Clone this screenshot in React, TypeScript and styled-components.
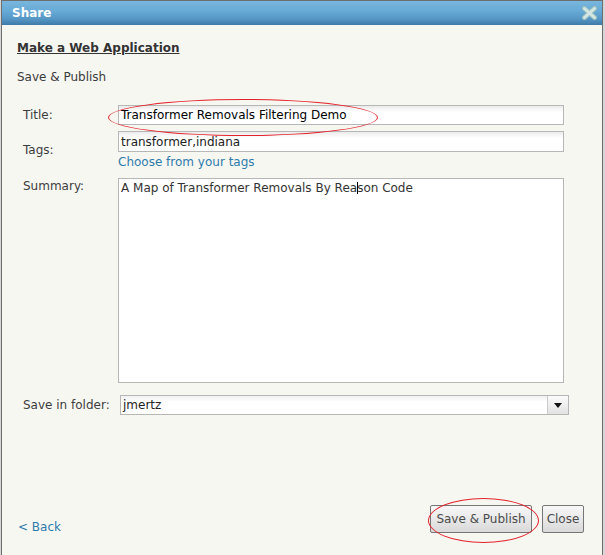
import React from "react";
import styled, { createGlobalStyle } from "styled-components";

const GlobalStyle = createGlobalStyle`
  html, body { margin: 0; padding: 0; background: #d6d6d6; overflow: hidden; }
  body { font-family: "DejaVu Sans", Verdana, sans-serif; font-size: 12px; }
`;

const Dialog = styled.div`
  position: relative;
  margin-left: 1px;
  width: 602px;
  height: 570px;
  box-sizing: border-box;
  border: 1px solid #6e6e6e;
  border-bottom: none;
  background: #f7f7f2;
  display: flex;
  flex-direction: column;
`;

const TitleBar = styled.div`
  height: 24px;
  box-sizing: border-box;
  display: flex;
  align-items: center;
  justify-content: space-between;
  padding: 0 5px 0 10px;
  background: linear-gradient(to bottom, #78b6dd 0%, #68abd7 40%, #5596c5 75%, #3d7aa8 100%);
`;

const TitleText = styled.span`
  color: #ffffff;
  font-weight: bold;
  font-size: 12px;
  line-height: 14px;
`;

const CloseIcon = styled.svg`
  width: 15px;
  height: 14px;
  display: block;
`;

const Body = styled.div`
  padding: 0 15px;
  display: flex;
  flex-direction: column;
`;

const Heading = styled.div`
  margin-top: 16px;
  font-weight: bold;
  color: #333333;
  line-height: 14px;
  text-decoration: underline;
`;

const SubHeading = styled.div`
  margin-top: 15px;
  color: #3a3a3a;
  line-height: 14px;
`;

const Form = styled.div`
  margin-top: 21px;
  margin-left: 6px;
  display: flex;
  flex-direction: column;
`;

const Row = styled.div<{ $mt: number; $align: string }>`
  display: flex;
  align-items: ${(p) => p.$align};
  margin-top: ${(p) => p.$mt}px;
`;

const Label = styled.div<{ $mt?: number }>`
  width: 95px;
  flex-shrink: 0;
  color: #3d3d3d;
  line-height: 14px;
  margin-top: ${(p) => p.$mt ?? 0}px;
`;

const FieldStack = styled.div`
  display: flex;
  flex-direction: column;
`;

const Field = styled.div<{ $h: number; $dark?: boolean }>`
  width: 446px;
  height: ${(p) => p.$h}px;
  box-sizing: border-box;
  border: 1px solid #b7b7b7;
  background: linear-gradient(to bottom, #ebebeb 0px, #ffffff 6px);
  padding: 1px 2px 0;
  line-height: ${(p) => p.$h - 3}px;
  color: ${(p) => (p.$dark ? "#000000" : "#222222")};
  white-space: nowrap;
  overflow: hidden;
`;

const TextArea = styled.div`
  width: 446px;
  height: 205px;
  box-sizing: border-box;
  border: 1px solid #b7b7b7;
  background: #ffffff;
  padding: 2px 2px;
  line-height: 14px;
  color: #333333;
`;

const Caret = styled.span`
  display: inline-block;
  width: 1px;
  height: 12px;
  background: #000;
  vertical-align: -2px;
  margin: 0 -0.5px;
`;

const Link = styled.div`
  margin-top: 3px;
  line-height: 14px;
  color: #2d7bab;
`;

const Select = styled.div`
  margin-left: 2px;
  width: 449px;
  height: 20px;
  box-sizing: border-box;
  border: 1px solid #b7b7b7;
  display: flex;
  background: #ffffff;
`;

const SelectValue = styled.div`
  flex: 1;
  padding-left: 2px;
  line-height: 18px;
  color: #222222;
  background: linear-gradient(to bottom, #f0f0f0 0px, #ffffff 6px);
`;

const SelectButton = styled.div`
  width: 20px;
  border-left: 1px solid #cacaca;
  background: linear-gradient(to bottom, #fbfbfb, #e2e2e2);
  display: flex;
  align-items: center;
  justify-content: center;
`;

const Footer = styled.div`
  margin-top: 90px;
  display: flex;
  justify-content: space-between;
  align-items: flex-start;
  padding: 0 3px 0 1px;
`;

const Back = styled.div`
  padding-top: 15px;
  line-height: 14px;
  color: #2d7bab;
`;

const ButtonGroup = styled.div`
  display: flex;
  gap: 10px;
`;

const Button = styled.button<{ $w: number }>`
  width: ${(p) => p.$w}px;
  height: 28px;
  box-sizing: border-box;
  padding: 0;
  border: 1px solid #767676;
  border-radius: 2px;
  background: linear-gradient(to bottom, #f8f8f8, #d9d9d9);
  color: #4b4b4b;
  font-family: "DejaVu Sans", Verdana, sans-serif;
  font-size: 12px;
  line-height: 26px;
  text-align: center;
  white-space: nowrap;
`;

const Annotation = styled.div<{ $x: number; $y: number; $w: number; $h: number }>`
  position: absolute;
  left: ${(p) => p.$x}px;
  top: ${(p) => p.$y}px;
  width: ${(p) => p.$w}px;
  height: ${(p) => p.$h}px;
  box-sizing: border-box;
  border: 1px solid #e3232b;
  border-radius: 50%;
  pointer-events: none;
`;

export default function App() {
  return (
    <>
      <GlobalStyle />
      <Dialog>
        <TitleBar>
          <TitleText>Share</TitleText>
          <CloseIcon viewBox="0 0 15 14">
            <path d="M2.5 2.5 L12.5 11.5 M12.5 2.5 L2.5 11.5" stroke="#9fc0bd" strokeWidth="5" strokeLinecap="round" fill="none" />
            <path d="M2.5 2.5 L12.5 11.5 M12.5 2.5 L2.5 11.5" stroke="#d4e7e4" strokeWidth="3" strokeLinecap="round" fill="none" />
          </CloseIcon>
        </TitleBar>
        <Body>
          <Heading>Make a Web Application</Heading>
          <SubHeading>Save &amp; Publish</SubHeading>
          <Form>
            <Row $mt={0} $align="center">
              <Label>Title:</Label>
              <Field $h={20} $dark>Transformer Removals Filtering Demo</Field>
            </Row>
            <Row $mt={6} $align="center">
              <Label>Tags:</Label>
              <FieldStack>
                <Field $h={21}>transformer,indiana</Field>
                <Link>Choose from your tags</Link>
              </FieldStack>
            </Row>
            <Row $mt={9} $align="flex-start">
              <Label $mt={1}>Summary:</Label>
              <TextArea>
                A Map of Transformer Removals By Rea<Caret />son Code
              </TextArea>
            </Row>
            <Row $mt={12} $align="center">
              <Label>Save in folder:</Label>
              <Select>
                <SelectValue>jmertz</SelectValue>
                <SelectButton>
                  <svg width="8" height="5" viewBox="0 0 8 5">
                    <path d="M0 0 H8 L4 5 Z" fill="#111" />
                  </svg>
                </SelectButton>
              </Select>
            </Row>
          </Form>
          <Footer>
            <Back>&lt; Back</Back>
            <ButtonGroup>
              <Button $w={102}>Save &amp; Publish</Button>
              <Button $w={42}>Close</Button>
            </ButtonGroup>
          </Footer>
        </Body>
        <Annotation $x={106} $y={98} $w={270} $h={37} />
        <Annotation $x={426} $y={497} $w={111} $h={45} />
      </Dialog>
    </>
  );
}
